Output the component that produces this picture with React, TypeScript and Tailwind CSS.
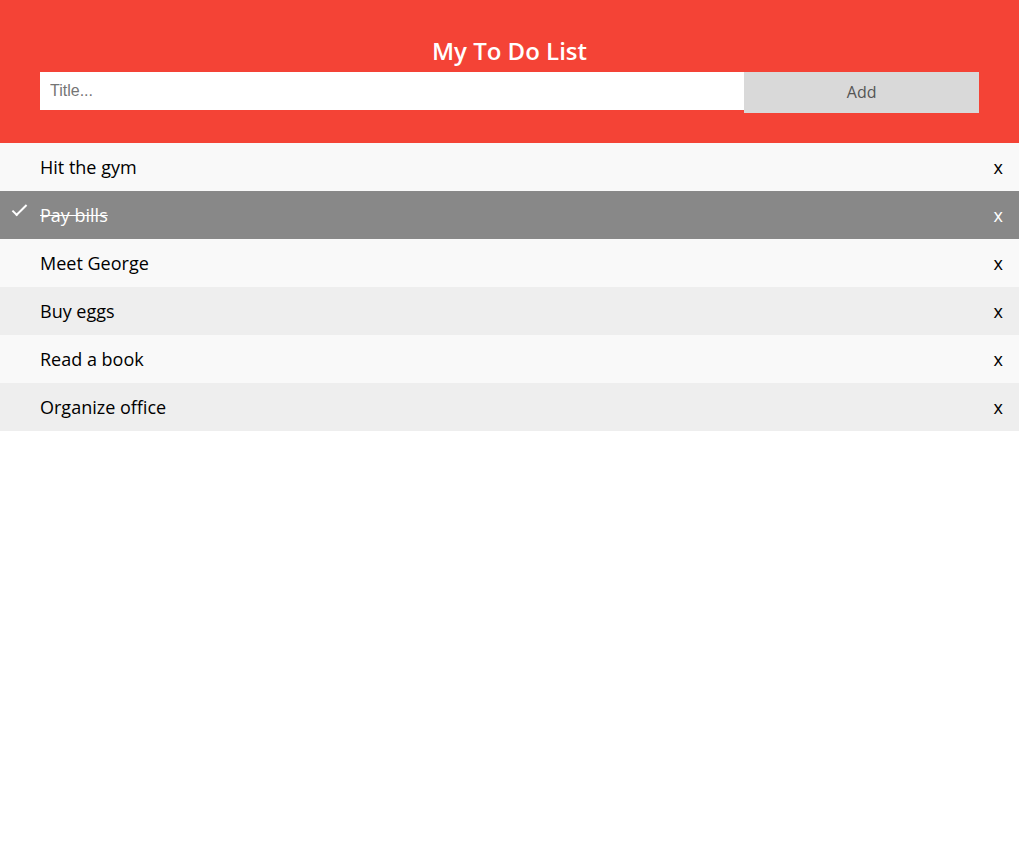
import React from "react";

const items = [
  { t: "Hit the gym", checked: false },
  { t: "Pay bills", checked: true },
  { t: "Meet George", checked: false },
  { t: "Buy eggs", checked: false },
  { t: "Read a book", checked: false },
  { t: "Organize office", checked: false },
];

export default function App() {
  return (
    <div className="w-[1019px] min-h-[844px] bg-white" style={{ fontFamily: '"Open Sans", "Noto Sans", sans-serif' }}>
      <div className="bg-[#f44336] px-[40px] pt-[30px] pb-[30px] text-white text-center">
        <h2 className="m-[5px] text-[24px] leading-[32px] font-semibold">My To Do List</h2>
        <div className="flex items-start">
          <input
            type="text"
            placeholder="Title..."
            className="w-[75%] h-[38px] p-[10px] text-[16px] bg-white text-black outline-none placeholder:text-[#757575] border-none"
            style={{ fontFamily: '"Liberation Sans", Arial, sans-serif' }}
          />
          <span className="w-[25%] h-[41px] bg-[#d9d9d9] text-[#555] text-[16px] leading-[21px] p-[10px] text-center">
            Add
          </span>
        </div>
      </div>
      <ul className="m-0 p-0">
        {items.map((it, i) => (
          <li
            key={i}
            className={
              "relative list-none pl-[40px] pr-[8px] py-[12px] text-[18px] leading-[24px] " +
              (it.checked
                ? "bg-[#888] text-white line-through"
                : i % 2 === 0
                ? "bg-[#f9f9f9] text-black"
                : "bg-[#eee] text-black")
            }
          >
            {it.checked && (
              <span className="absolute top-[10px] left-[16px] h-[15px] w-[7px] rotate-45 border-white border-solid border-r-2 border-b-2" />
            )}
            {it.t}
            <span className="absolute right-0 top-0 px-[16px] py-[12px] no-underline" style={{ textDecoration: "none" }}>
              x
            </span>
          </li>
        ))}
      </ul>
    </div>
  );
}
